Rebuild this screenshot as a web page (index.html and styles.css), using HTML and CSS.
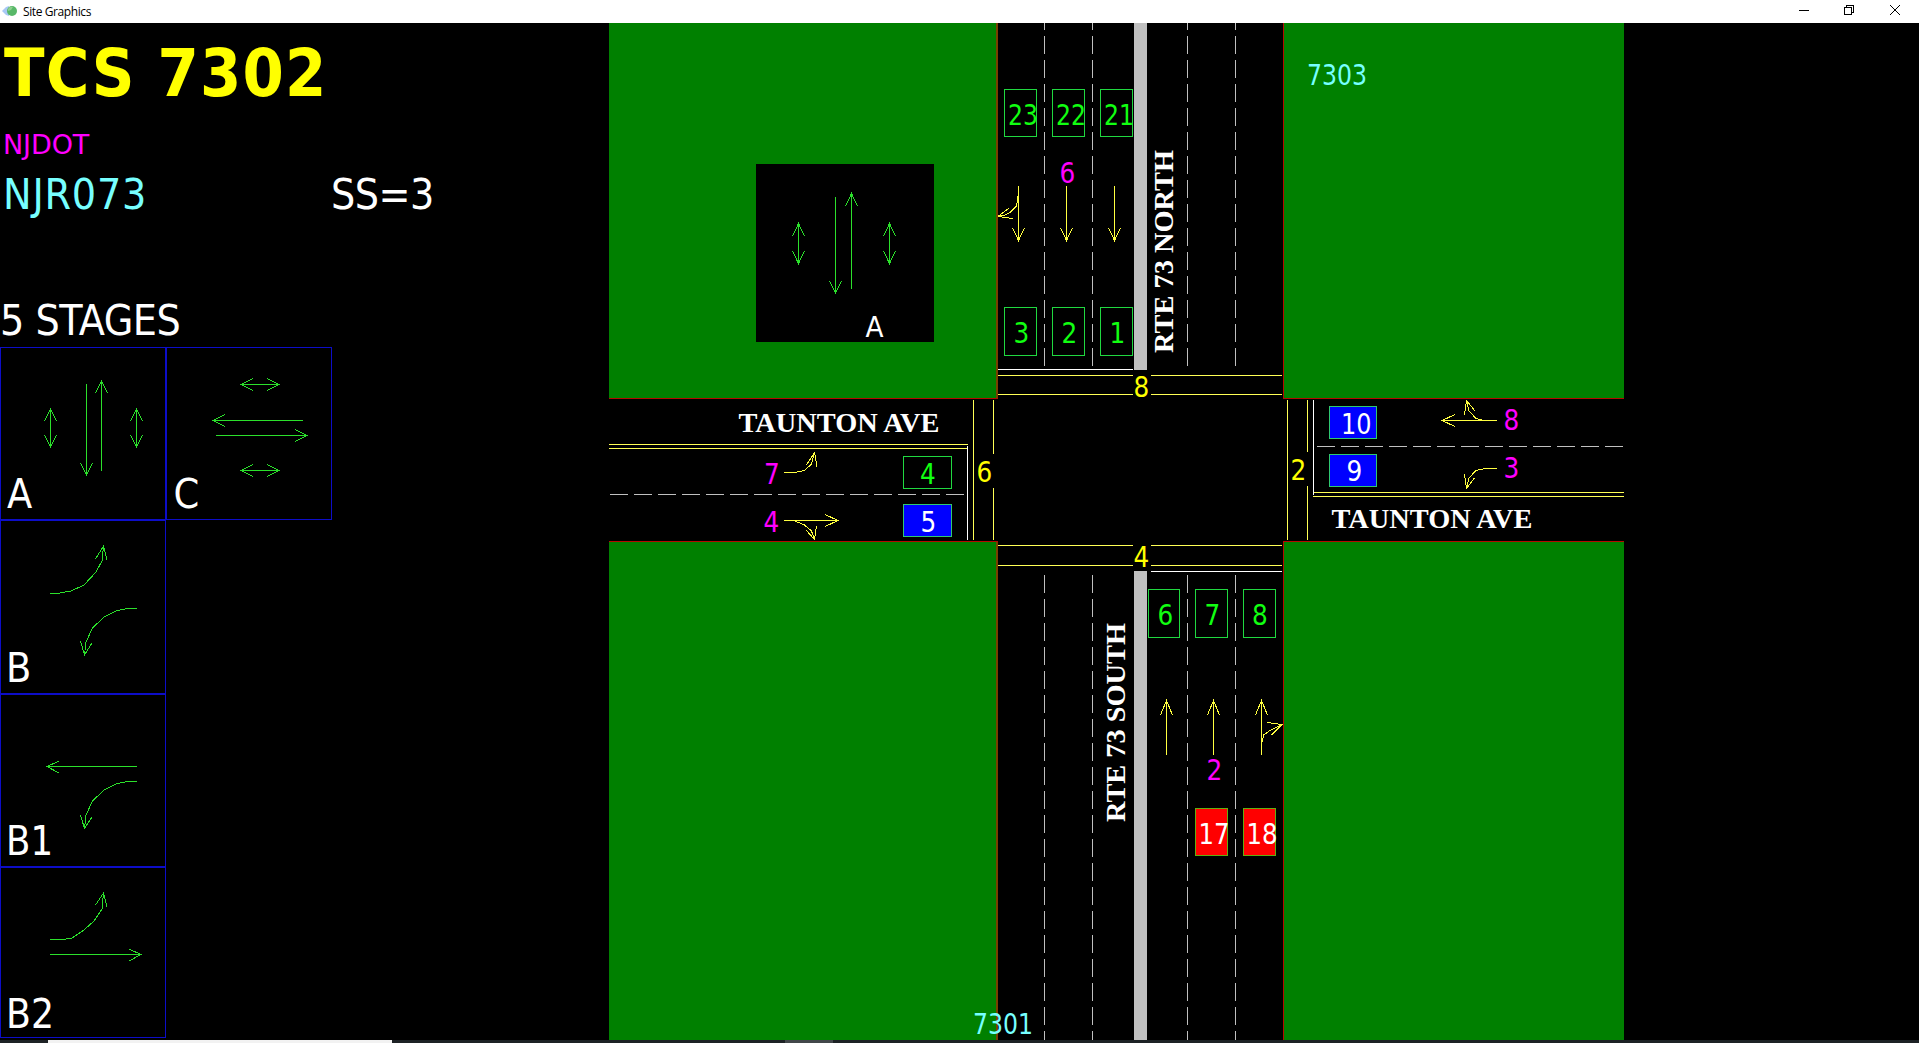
FILE: index.html
```html
<!DOCTYPE html>
<html lang="en">
<head>
<meta charset="utf-8">
<title>Site Graphics</title>
<link rel="stylesheet" href="styles.css">
</head>
<body>
<header class="titlebar">
  <svg class="app-icon" width="16" height="14" viewBox="0 0 16 14">
    <path d="M0 7 L4 3 L7 2 V12 L4 11 Z" fill="#a9c9f5"/>
    <circle cx="10" cy="7" r="5" fill="#58b868"/>
    <path d="M6 5 a4 4 0 0 1 5 -2 l-2 3 l-3 1z" fill="#8ed08e"/>
  </svg>
  <h1 class="window-title">Site Graphics</h1>
  <nav class="window-buttons">
    <svg width="46" height="21" viewBox="0 0 46 21"><path class="glyph" d="M18 10.500H28"/></svg>
    <svg width="46" height="21" viewBox="0 0 46 21"><path class="glyph" d="M17.500 7.500h7v7h-7zM19.500 7V5.500h7v7H25"/></svg>
    <svg width="46" height="21" viewBox="0 0 46 21"><path class="glyph smooth" d="M17 5l10 10M27 5L17 15"/></svg>
  </nav>
</header>
<main class="workspace">
  <aside class="sidebar">
    <h2 class="controller">TCS 7302</h2>
    <p class="agency">NJDOT</p>
    <p class="route"><span class="route-id">NJR073</span><span class="subsystem">SS=3</span></p>
    <h3 class="stage-count">5 STAGES</h3>
    <section class="stages">
      <svg class="stage" viewBox="0 0 166 173">
        <path class="flow" d="M86.500 37V128M80.500 116L86.500 128L92.500 116M101.500 124V34M95.500 46L101.500 34L107.500 46M50.500 62V100M44.500 74L50.500 62L56.500 74M44.500 88L50.500 100L56.500 88M136.500 62V100M130.500 74L136.500 62L142.500 74M130.500 88L136.500 100L142.500 88"/>
        <text class="stage-name" x="7" y="161">A</text>
      </svg>
      <svg class="stage" viewBox="0 0 166 173">
        <path class="flow" d="M75 37.500H113M87 31.500L75 37.500L87 43.500M101 31.500L113 37.500L101 43.500M137 73.500H47M59 67.500L47 73.500L59 79.500M50 88.500H141M129 82.500L141 88.500L129 94.500M75 123.500H113M87 117.500L75 123.500L87 129.500M101 117.500L113 123.500L101 129.500"/>
        <text class="stage-name" x="7.500" y="161">C</text>
      </svg>
      <svg class="stage" viewBox="0 0 166 174">
        <path class="flow" d="M50 73.500L60 73L71 71L84 65L96 52L102 41L103.500 26M95.500 39L103.500 26L107 40M137 88.500L128 88.500L117 90.500L104 97L92.500 108L86 122L84.500 135M80.500 121L84.500 135L92 123"/>
        <text class="stage-name" x="6" y="161.500">B</text>
      </svg>
      <svg class="stage below" viewBox="0 0 166 173">
        <path class="flow" d="M137 72.500H47M59 67L47 72.500L59 79M137 87.500L128 87.500L117 89.500L104 96L92.500 107L86 121L84.500 134.500M80.500 121L84.500 134.500L92 123"/>
        <text class="stage-name" x="6" y="160.500" textLength="47" lengthAdjust="spacingAndGlyphs">B1</text>
      </svg>
      <svg class="stage below" viewBox="0 0 166 171">
        <path class="flow" d="M50 72.500L63 72.500L72 71L84 63L94 54L102 42L103.500 26M95.500 38L103.500 26L107 40M50 87.500H141M129 82L141 87.500L129 94"/>
        <text class="stage-name" x="6" y="160.500" textLength="48" lengthAdjust="spacingAndGlyphs">B2</text>
      </svg>
    </section>
  </aside>
  <svg class="intersection" width="1015" height="1017" viewBox="609 23 1015 1017">
    <!-- corner lots and curbs -->
    <path class="lot" d="M609 23H996V398H609zM1284 23H1624V398H1284zM609 542H996V1040H609zM1284 542H1624V1040H1284z"/>
    <path class="curb-shade" d="M996 23h2V398h-2zM996 542h2V1040h-2z"/>
    <path class="curb" d="M609 398.500H998M609 541.500H998M1624 398.500H1283.500V23M1624 541.500H1283.500V1040"/>
    <!-- median -->
    <path class="median" d="M1134 23h13V370h-13zM1134 571h13V1040h-13z"/>
    <!-- lane dividers -->
    <path class="lane" stroke-dashoffset="11" d="M1044.500 23V366M1092.500 23V366M1187.500 23V366M1235.500 23V366"/>
    <path class="lane" d="M1044.500 575V1040M1092.500 575V1040M1187.500 575V1040M1235.500 575V1040M610 494.500H964M1317 446.500H1624"/>
    <!-- crosswalks and centre lines -->
    <path class="mark" d="M998 375.500H1133M1151 375.500H1282M998 394.500H1133M1151 394.500H1282M998 545.500H1133M1151 545.500H1282M998 565.500H1133M1151 565.500H1282M973.500 400V540M993.500 400V454M993.500 488V540M1287.500 400V540M1307.500 400V452M1307.500 486V540M609 444.500H968M609 448.500H968M1313 492.500H1624M1313 496.500H1624"/>
    <path class="stop" d="M998 369.500H1133M1151 571.500H1282M967.500 446V540M1313.500 400V495"/>
    <!-- movement arrows -->
    <path class="arrow" d="M1018.500 186V241M1012.500 228L1018.500 240.500L1024.500 228M1066.500 186V241M1060.500 228L1066.500 240.500L1072.500 228M1114.500 186V241M1108.500 228L1114.500 240.500L1120.500 228M1018 196L1016.500 206L1010 212.500L1005 215L998 216.500L1009 208M998 216.500L1013 218.500"/>
    <path class="arrow" d="M1166.500 755V700M1160.500 715L1166.500 700.500L1172.500 715M1213.500 755V700M1207.500 715L1213.500 700.500L1219.500 715M1261.500 755V700M1255.500 715L1261.500 700.500L1267.500 715M1262.500 742L1263.500 735L1270 730.500L1282 724.500L1267 722.500M1282 724.500L1271.500 735"/>
    <path class="arrow" d="M784 472.500H795L804.500 470.500L811.500 464L814.500 452.500L806.500 465M814.500 452.500L817 467M784 520.500H838M825 514.500L838 520.500L825 526.500M795 521L804.500 525L811.500 531L814.500 539.500L806 530M814.500 539.500L816.500 526"/>
    <path class="arrow" d="M1497 420.500H1442M1455 414.500L1442 420.500L1455 426.500M1484 420.500L1476 418.500L1469 411L1466.500 400.500L1464.500 415M1466.500 400.500L1475 411M1497 468.500H1485L1476 470.500L1469 478L1466.500 488.500L1464.500 474M1466.500 488.500L1474.500 478"/>
    <!-- detectors -->
    <path class="detector" d="M1004.500 89.500h32v47h-32zM1052.500 89.500h32v47h-32zM1100.500 89.500h32v47h-32zM1004.500 307.500h32v48h-32zM1052.500 307.500h32v48h-32zM1100.500 307.500h32v48h-32zM1148.500 589.500h31v48h-31zM1195.500 589.500h32v48h-32zM1243.500 589.500h32v48h-32zM903.500 456.500h48v32h-48z"/>
    <path class="detector occupied" d="M903.500 504.500h48v32h-48zM1329.500 406.500h47v32h-47zM1329.500 454.500h47v32h-47z"/>
    <path class="detector failed" d="M1195.500 808.500h32v47h-32zM1243.500 808.500h32v47h-32z"/>
    <g class="num green">
      <text x="1008" y="125" textLength="30" lengthAdjust="spacingAndGlyphs">23</text>
      <text x="1056" y="125" textLength="30" lengthAdjust="spacingAndGlyphs">22</text>
      <text x="1104" y="125" textLength="30" lengthAdjust="spacingAndGlyphs">21</text>
      <text x="1013.500" y="343">3</text><text x="1061.500" y="343">2</text><text x="1109.500" y="343">1</text>
      <text x="1157.500" y="625">6</text><text x="1204.500" y="625">7</text><text x="1252" y="625">8</text>
      <text x="920" y="484">4</text>
    </g>
    <g class="num white">
      <text x="920.500" y="532">5</text><text x="1346.500" y="481">9</text>
      <text x="1341" y="434" textLength="30.500" lengthAdjust="spacingAndGlyphs">10</text>
      <text x="1198.500" y="844" textLength="31" lengthAdjust="spacingAndGlyphs">17</text>
      <text x="1246.500" y="844" textLength="31" lengthAdjust="spacingAndGlyphs">18</text>
    </g>
    <g class="num magenta">
      <text x="1059.500" y="183">6</text><text x="1206.500" y="780">2</text>
      <text x="764" y="484">7</text><text x="763.500" y="532">4</text>
      <text x="1503.500" y="430">8</text><text x="1503.500" y="478">3</text>
    </g>
    <g class="num yellow">
      <text x="1133.500" y="396.500">8</text><text x="1133.500" y="567">4</text>
      <text x="976.500" y="482">6</text><text x="1290.500" y="480">2</text>
    </g>
    <g class="num cyan">
      <text x="1307" y="85" textLength="60" lengthAdjust="spacingAndGlyphs">7303</text>
      <text x="973" y="1034" textLength="60" lengthAdjust="spacingAndGlyphs">7301</text>
    </g>
    <!-- street names -->
    <g class="street">
      <text x="738.500" y="432" textLength="201" lengthAdjust="spacingAndGlyphs">TAUNTON AVE</text>
      <text x="1331.500" y="528" textLength="201" lengthAdjust="spacingAndGlyphs">TAUNTON AVE</text>
      <text transform="translate(1173 353) rotate(-90)" textLength="203" lengthAdjust="spacingAndGlyphs">RTE 73 NORTH</text>
      <text transform="translate(1125 822) rotate(-90)" textLength="199" lengthAdjust="spacingAndGlyphs">RTE 73 SOUTH</text>
    </g>
    <!-- running stage -->
    <path d="M756 164h178v178h-178z"/>
    <path class="flow" d="M835.500 197V293M829.500 281L835.500 293L841.500 281M851.500 289V193M845.500 206L851.500 193.500L857.500 206M798.500 223V264M792.500 236L798.500 223.500L804.500 236M792.500 251L798.500 263.500L804.500 251M889.500 223V264M883.500 236L889.500 223.500L895.500 236M883.500 251L889.500 263.500L895.500 251"/>
    <g class="num white"><text x="865.500" y="337" textLength="18" lengthAdjust="spacingAndGlyphs">A</text></g>
  </svg>
</main>
<footer class="taskbar"><span class="task-start"></span><span class="task-search"></span><span class="task-gap"></span><span class="task-active"></span></footer>
</body>
</html>
```
FILE: styles.css
```css
body {
  margin: 0;
  height: 1043px;
  display: flex;
  flex-direction: column;
  background: #000;
  overflow: hidden;
  font-family: "DejaVu Sans Condensed", "DejaVu Sans", sans-serif;
  font-stretch: condensed;
}
h1, h2, h3, p { margin: 0; font-weight: normal; }

.titlebar {
  flex: none;
  height: 23px;
  display: flex;
  align-items: flex-start;
  background: #fff;
}
.app-icon { margin: 4px 5px 0 2px; }
.window-title {
  font: 12px/23px "Open Sans", sans-serif;
  letter-spacing: -0.4px;
  color: #000;
}
.window-buttons { display: flex; margin-left: auto; }
.glyph { fill: none; stroke: #000; shape-rendering: crispEdges; }
.glyph.smooth { shape-rendering: auto; }

.workspace { flex: none; display: flex; height: 1017px; }
.sidebar { width: 609px; }
.controller {
  height: 97px;
  padding-left: 4px;
  font-weight: bold;
  font-size: 66px;
  line-height: 102px;
  letter-spacing: 1.2px;
  color: #ff0;
  white-space: nowrap;
}
.agency {
  height: 48px;
  padding-left: 3px;
  font-family: "DejaVu Sans", sans-serif;
  font-stretch: normal;
  font-size: 27px;
  line-height: 50px;
  letter-spacing: -0.1px;
  color: #f0f;
}
.route {
  display: flex;
  height: 50px;
  padding-left: 3px;
  font-size: 42.500px;
  line-height: 53px;
  letter-spacing: -0.5px;
}
.route-id { width: 328px; letter-spacing: 0.8px; color: #7ff; }
.subsystem { color: #fff; }
.stage-count {
  height: 53px;
  padding-top: 76px;
  font-size: 42.500px;
  line-height: 53px;
  letter-spacing: -0.5px;
  color: #fff;
}
.stages {
  display: grid;
  grid-template-columns: 166px 166px;
  grid-template-rows: 173px 174px 173px 171px;
}
.stage {
  width: 100%;
  height: 100%;
  outline: 1px solid #0d0dc8;
  outline-offset: -1px;
}
.stage.below { grid-column: 1; }
.stage-name { fill: #fff; font-size: 41px; }
.flow { fill: none; stroke: #2be02b; shape-rendering: crispEdges; }

.intersection { flex: none; display: block; }
.lot { fill: #008000; }
.curb-shade { fill: #784000; }
.curb { fill: none; stroke: #b40a00; shape-rendering: crispEdges; }
.median { fill: #c0c0c0; }
.lane { stroke: #c0c0c0; stroke-dasharray: 18 6; shape-rendering: crispEdges; }
.mark { stroke: #ffff55; shape-rendering: crispEdges; }
.stop { stroke: #fff; shape-rendering: crispEdges; }
.arrow { fill: none; stroke: #ffff40; shape-rendering: crispEdges; }
.detector { fill: none; stroke: #20d840; shape-rendering: crispEdges; }
.detector.occupied { fill: #00f; stroke: #30c870; }
.detector.failed { fill: #f00; stroke: #60b010; }
.num { font-size: 27.500px; }
.green { fill: #1f1; }
.white { fill: #fff; }
.magenta { fill: #f0f; }
.yellow { fill: #ff0; }
.cyan { fill: #7ff; }
.street {
  font: bold 26.500px "Liberation Serif", "Times New Roman", serif;
  fill: #fff;
}

.taskbar { flex: none; display: flex; height: 3px; background: #1d2225; }
.task-start { width: 48px; }
.task-search { width: 344px; background: #f2f2f2; }
.task-gap { width: 393px; }
.task-active { width: 48px; background: #42474a; }
```
